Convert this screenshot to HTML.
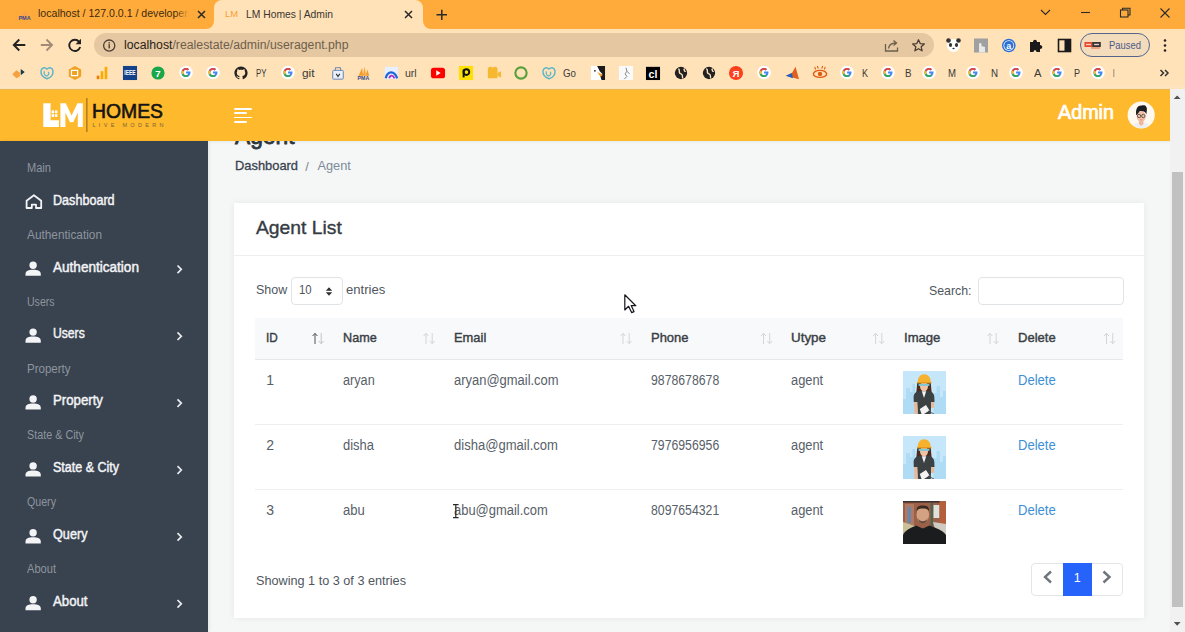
<!DOCTYPE html>
<html><head><meta charset="utf-8"><title>LM Homes | Admin</title><style>
*{box-sizing:border-box;margin:0;padding:0}
html,body{width:1185px;height:632px;overflow:hidden;background:#f4f6f8;font-family:"Liberation Sans",sans-serif}
.a{position:absolute}
.t{position:absolute;white-space:nowrap;transform-origin:0 0;line-height:1}
svg.o{position:absolute;left:0;top:0}
</style></head><body>
<div class="a" style="left:0;top:0;width:1185px;height:89px;background:#ffe2b8"></div>
<div class="a" style="left:0;top:0;width:214px;height:29px;background:#ffab3b;border-bottom-right-radius:8px"></div>
<div class="a" style="left:423px;top:0;width:762px;height:29px;background:#ffab3b;border-bottom-left-radius:8px"></div>
<div class="a" style="left:214px;top:0;width:209px;height:10px;background:#ffab3b"></div>
<div class="a" style="left:214px;top:0;width:209px;height:29px;background:#ffe2b8;border-radius:8px 8px 0 0"></div>
<div class="a" style="left:94px;top:33px;width:840px;height:24px;background:#e5c8a1;border-radius:12px"></div>
<div class="a" style="left:0;top:86px;width:1185px;height:2px;background:#ffe5bf"></div>
<div class="a" style="left:1080px;top:33px;width:70px;height:24px;border:1.4px solid #54648c;border-radius:12px;background:#f3dcbc"></div>
<div class="t" style="left:38.40px;top:8.12px;font-size:11.5px;color:#3b2a10;transform:scaleX(0.9185);">localhost / 127.0.0.1 / developers</div>
<div class="a" style="left:175px;top:5px;width:18px;height:18px;background:linear-gradient(90deg,rgba(255,171,59,0),#ffab3b 80%)"></div>
<div class="a" style="left:193px;top:5px;width:20px;height:18px;background:#ffab3b"></div>
<div class="t" style="left:245.90px;top:8.55px;font-size:11px;color:#3a3530;transform:scaleX(0.9382);">LM Homes | Admin</div>
<div class="t" style="left:224.90px;top:10.38px;font-size:8.5px;color:#f5a030;transform:scaleX(1.1003);">LM</div>
<div class="t" style="left:123.50px;top:39.08px;font-size:12.5px;color:#2b2118;transform:scaleX(0.9820);">localhost<span style="color:#6e5e4c">/realestate/admin/useragent.php</span></div>
<div class="t" style="left:1109.00px;top:39.52px;font-size:11.5px;color:#4a5a8a;transform:scaleX(0.8208);">Paused</div>
<div class="t" style="left:255.70px;top:67.72px;font-size:11.5px;color:#3a3a3a;transform:scaleX(0.6839);">PY</div>
<div class="t" style="left:301.50px;top:67.72px;font-size:11.5px;color:#3a3a3a;transform:scaleX(1.0303);">git</div>
<div class="t" style="left:405.00px;top:67.72px;font-size:11.5px;color:#3a3a3a;transform:scaleX(0.9166);">url</div>
<div class="t" style="left:563.00px;top:67.72px;font-size:11.5px;color:#3a3a3a;transform:scaleX(0.8468);">Go</div>
<div class="t" style="left:862.00px;top:67.72px;font-size:11.5px;color:#3a3a3a;transform:scaleX(0.7846);">K</div>
<div class="t" style="left:905.40px;top:67.72px;font-size:11.5px;color:#3a3a3a;transform:scaleX(0.8500);">B</div>
<div class="t" style="left:947.60px;top:67.72px;font-size:11.5px;color:#3a3a3a;transform:scaleX(0.8331);">M</div>
<div class="t" style="left:991.00px;top:67.72px;font-size:11.5px;color:#3a3a3a;transform:scaleX(0.8454);">N</div>
<div class="t" style="left:1033.50px;top:67.72px;font-size:11.5px;color:#3a3a3a;transform:scaleX(0.9734);">A</div>
<div class="t" style="left:1074.00px;top:67.72px;font-size:11.5px;color:#3a3a3a;transform:scaleX(0.7846);">P</div>
<div class="t" style="left:1113.00px;top:67.72px;font-size:11.5px;color:#3a3a3a;transform:scaleX(0.4658);">I</div>
<svg class="o" width="1185" height="88" viewBox="0 0 1185 88">
<defs><g id="g"><circle cx="8" cy="8" r="8" fill="#fff"/>
<path d="M12.6 6.9 H8.1 V9.1 H10.7 C10.4 10.4 9.3 11.2 8 11.2 C6.2 11.2 4.8 9.8 4.8 8 C4.8 6.2 6.2 4.8 8 4.8 C8.8 4.8 9.5 5.1 10 5.6 L11.6 4 C10.7 3.2 9.4 2.6 8 2.6 C5 2.6 2.6 5 2.6 8 C2.6 11 5 13.4 8 13.4 C11 13.4 13.3 11.2 13.3 8 C13.3 7.6 13.2 7.3 13.2 6.9 Z" fill="#4285f4"/>
<path d="M3.2 5.5 L5.1 6.9 C5.5 5.6 6.6 4.8 8 4.8 C8.8 4.8 9.5 5.1 10 5.6 L11.6 4 C10.7 3.2 9.4 2.6 8 2.6 C5.9 2.6 4.1 3.8 3.2 5.5 Z" fill="#ea4335"/>
<path d="M2.6 8 C2.6 8.9 2.8 9.7 3.2 10.5 L5.1 9.1 C4.9 8.8 4.8 8.4 4.8 8 C4.8 7.6 4.9 7.2 5.1 6.9 L3.2 5.5 C2.8 6.3 2.6 7.1 2.6 8 Z" fill="#fbbc05"/>
<path d="M3.2 10.5 C4.1 12.2 5.9 13.4 8 13.4 C9.4 13.4 10.6 12.9 11.5 12.1 L9.7 10.7 C9.2 11 8.6 11.2 8 11.2 C6.6 11.2 5.5 10.4 5.1 9.1 Z" fill="#34a853"/>
</g></defs>
<g transform="translate(19.0,73.0) scale(.88) translate(-8,-8)"><path d="M0.5 9.5 L5 5 L9 7.5 L9 12 L5 14 Z" fill="#f7a040"/><path d="M10 3.5 L14.5 7 L10 10.5 Z" fill="#143a44"/></g>
<g transform="translate(47.0,73.0) scale(.88) translate(-8,-8)"><path d="M8 14.5 C3.5 13 0.8 9.5 1.2 5.5 C1.6 2 5.5 1 8 3.6 C10.5 1 14.4 2 14.8 5.5 C15.2 9.5 12.5 13 8 14.5 Z" fill="none" stroke="#5cb4c8" stroke-width="1.6"/><path d="M5 6 C4 9 6 12 8.5 11 C10.5 10 10.5 7 9 7" fill="none" stroke="#5cb4c8" stroke-width="1.4"/></g>
<g transform="translate(75.0,73.0) scale(.88) translate(-8,-8)"><path d="M8 0 L15 4 L15 12 L8 16 L1 12 L1 4 Z" fill="#f0a020"/><rect x="4" y="5" width="7" height="6" fill="none" stroke="#fff" stroke-width="1.4"/></g>
<g transform="translate(102.0,73.0) scale(.88) translate(-8,-8)"><rect x="2" y="11" width="3" height="4" fill="#f57c00"/><rect x="6.5" y="6" width="3" height="9" fill="#f9ab00"/><rect x="11" y="1" width="3" height="14" fill="#f9ab00"/></g>
<g transform="translate(130.0,73.0) scale(.88) translate(-8,-8)"><rect x="0" y="0" width="16" height="16" fill="#13418a"/><text x="8" y="10.8" font-size="7.5" fill="#fff" text-anchor="middle" font-family="Liberation Sans" font-weight="bold" textLength="13" lengthAdjust="spacingAndGlyphs">IEEE</text></g>
<g transform="translate(158.0,73.0) scale(.88) translate(-8,-8)"><circle cx="8" cy="8" r="7.5" fill="#1aa64a"/><text x="8" y="12" font-size="11" fill="#fff" text-anchor="middle" font-family="Liberation Sans" font-weight="bold">7</text></g>
<use href="#g" transform="translate(186,72.5) scale(.85) translate(-8,-8)"/>
<use href="#g" transform="translate(213,72.5) scale(.85) translate(-8,-8)"/>
<g transform="translate(241.0,73.0) scale(.88) translate(-8,-8)"><path d="M8 0.5 C3.8 0.5 0.5 3.9 0.5 8.1 C0.5 11.4 2.6 14.2 5.6 15.2 C6 15.3 6.1 15 6.1 14.8 V13.5 C4 13.9 3.6 12.6 3.6 12.6 C3.2 11.7 2.7 11.5 2.7 11.5 C2 11 2.7 11 2.7 11 C3.5 11.1 3.9 11.8 3.9 11.8 C4.6 13 5.7 12.6 6.1 12.4 C6.2 11.9 6.4 11.6 6.6 11.4 C4.9 11.2 3.2 10.6 3.2 7.8 C3.2 7 3.5 6.3 3.9 5.8 C3.8 5.6 3.6 4.8 4 3.8 C4 3.8 4.6 3.6 6.1 4.6 C6.7 4.4 7.4 4.3 8 4.3 C8.6 4.3 9.3 4.4 9.9 4.6 C11.4 3.6 12 3.8 12 3.8 C12.4 4.8 12.2 5.6 12.1 5.8 C12.5 6.3 12.8 7 12.8 7.8 C12.8 10.6 11.1 11.2 9.4 11.4 C9.7 11.7 9.9 12.1 9.9 12.8 V14.8 C9.9 15 10 15.3 10.4 15.2 C13.4 14.2 15.5 11.4 15.5 8.1 C15.5 3.9 12.2 0.5 8 0.5 Z" fill="#222"/></g>
<use href="#g" transform="translate(288,72.5) scale(.85) translate(-8,-8)"/>
<g transform="translate(338.0,73.0) scale(.88) translate(-8,-8)"><rect x="2" y="5" width="12" height="10" rx="1" fill="#e8f0fa" stroke="#5a7ab0" stroke-width="1"/><path d="M5 5 L5 2 L11 2 L11 5" fill="none" stroke="#5a7ab0"/><path d="M6 9 L8 12 L10 9" fill="none" stroke="#333" stroke-width="1.3"/></g>
<g transform="translate(363.0,73.0) scale(.88) translate(-8,-8)"><path d="M3 11 L7 2 L8 11 Z" fill="#f39a2a"/><path d="M7.5 11 L10 1 L11.5 11 Z" fill="#f5a83a"/><path d="M11 11 L13 4 L15 11 Z" fill="#f39a2a"/><text x="8.5" y="15.5" font-size="6" fill="#34488a" text-anchor="middle" font-family="Liberation Sans" font-weight="bold">PMA</text></g>
<g transform="translate(391.0,73.0) scale(.88) translate(-8,-8)"><rect x="1" y="1" width="15" height="14" fill="#e8f0ff"/><path d="M2 14 C4 5 12 5 15 14" fill="none" stroke="#1a66d8" stroke-width="2.5"/><path d="M6 14 C7 10 10 10 12 14" fill="none" stroke="#b030c0" stroke-width="2"/></g>
<g transform="translate(438.0,73.0) scale(.88) translate(-8,-8)"><rect x="0" y="2" width="16" height="12" rx="3" fill="#ff0000"/><path d="M6 5 L11 8 L6 11 Z" fill="#fff"/></g>
<g transform="translate(466.0,73.0) scale(.88) translate(-8,-8)"><rect x="0" y="0" width="16" height="16" fill="#ffe000"/><circle cx="8.5" cy="7" r="3.2" fill="none" stroke="#111" stroke-width="2.2"/><rect x="4.2" y="4" width="2.2" height="9" fill="#111"/></g>
<g transform="translate(494.0,73.0) scale(.88) translate(-8,-8)"><rect x="1" y="5" width="11" height="9" rx="1" fill="#f5b830"/><circle cx="4" cy="4" r="3" fill="#f5b830"/><circle cx="9" cy="4" r="3" fill="#f5b830"/><path d="M12 8 L16 6 L16 13 L12 11 Z" fill="#f5b830"/></g>
<g transform="translate(521.0,73.0) scale(.88) translate(-8,-8)"><circle cx="8" cy="8" r="6.4" fill="none" stroke="#58a03c" stroke-width="2.4"/></g>
<g transform="translate(549.0,73.0) scale(.88) translate(-8,-8)"><path d="M8 14.5 C3.5 13 0.8 9.5 1.2 5.5 C1.6 2 5.5 1 8 3.6 C10.5 1 14.4 2 14.8 5.5 C15.2 9.5 12.5 13 8 14.5 Z" fill="none" stroke="#5cb4c8" stroke-width="1.6"/><path d="M5 6 C4 9 6 12 8.5 11 C10.5 10 10.5 7 9 7" fill="none" stroke="#5cb4c8" stroke-width="1.4"/></g>
<g transform="translate(598.0,73.0) scale(.88) translate(-8,-8)"><rect x="0" y="0" width="16" height="16" fill="#fff"/><path d="M7 0 H16 V16 H12 L10.5 11 L13 9 L10 6 Z" fill="#1a1a1a"/><circle cx="4.5" cy="5.5" r="1" fill="#222"/><path d="M7 7 L13.5 10 L11 12.5 Z" fill="#f0a030"/></g>
<g transform="translate(626.0,73.0) scale(.88) translate(-8,-8)"><rect x="0" y="0" width="16" height="16" fill="#fafafa"/><path d="M8 2 L9 6 L7 9 L9 12 L6 15 M9 6 L12 9" fill="none" stroke="#777" stroke-width="1"/></g>
<g transform="translate(653.0,73.0) scale(.88) translate(-8,-8)"><rect x="0" y="1" width="16" height="15" fill="#000"/><text x="8" y="13.5" font-size="12" fill="#fff" text-anchor="middle" font-family="Liberation Sans" font-weight="bold">cl</text></g>
<g transform="translate(681.0,73.0) scale(.88) translate(-8,-8)"><circle cx="8" cy="8" r="7" fill="#222"/><path d="M5 3 C8 5 4 8 8 9 C11 10 9 13 10 14 M12 3 C10 5 13 6 13 7" fill="none" stroke="#ffe2b8" stroke-width="1.6"/></g>
<g transform="translate(709.0,73.0) scale(.88) translate(-8,-8)"><circle cx="8" cy="8" r="7" fill="#222"/><path d="M5 3 C8 5 4 8 8 9 C11 10 9 13 10 14 M12 3 C10 5 13 6 13 7" fill="none" stroke="#ffe2b8" stroke-width="1.6"/></g>
<g transform="translate(736.0,73.0) scale(.88) translate(-8,-8)"><circle cx="8" cy="8" r="8" fill="#fc3f1d"/><text x="8" y="12.5" font-size="11" fill="#fff" text-anchor="middle" font-family="Liberation Sans" font-weight="bold">Я</text></g>
<use href="#g" transform="translate(764,72.5) scale(.85) translate(-8,-8)"/>
<g transform="translate(792.0,73.0) scale(.88) translate(-8,-8)"><path d="M1 11 L8 8 L12 1 L16 15 Z" fill="#e06020"/><path d="M1 11 L8 8 L9 14 Z" fill="#2060c0"/></g>
<g transform="translate(820.0,73.0) scale(.88) translate(-8,-8)"><ellipse cx="8" cy="9" rx="7.5" ry="4" fill="none" stroke="#e05a10" stroke-width="1.6"/><circle cx="8" cy="9" r="2.5" fill="#e05a10"/><path d="M3 4 L2 1 M6 3 L5 0 M10 3 L11 0 M13 4 L14 1" stroke="#e05a10" stroke-width="1.2"/></g>
<use href="#g" transform="translate(847,72.5) scale(.85) translate(-8,-8)"/>
<use href="#g" transform="translate(888,72.5) scale(.85) translate(-8,-8)"/>
<use href="#g" transform="translate(929,72.5) scale(.85) translate(-8,-8)"/>
<use href="#g" transform="translate(973,72.5) scale(.85) translate(-8,-8)"/>
<use href="#g" transform="translate(1016,72.5) scale(.85) translate(-8,-8)"/>
<use href="#g" transform="translate(1057,72.5) scale(.85) translate(-8,-8)"/>
<use href="#g" transform="translate(1098,72.5) scale(.85) translate(-8,-8)"/>
<g fill="none" stroke="#222" stroke-width="1.9" stroke-linecap="butt">
<path d="M14 45 H25.3 M19.3 39.5 L13.8 45 L19.3 50.5"/>
</g>
<g fill="none" stroke="#a08c74" stroke-width="1.9"><path d="M40.8 45 H52 M46.5 39.5 L52 45 L46.5 50.5"/></g>
<g fill="none" stroke="#222" stroke-width="1.9"><path d="M79.2 41.8 A5.6 5.6 0 1 0 80.2 47"/></g><path d="M81 38.8 V44.2 H75.6 Z" fill="#222"/>
<circle cx="109.2" cy="45.6" r="5.6" fill="none" stroke="#4a3e32" stroke-width="1.3"/><rect x="108.5" y="44.2" width="1.4" height="4.2" fill="#4a3e32"/><rect x="108.5" y="42.2" width="1.4" height="1.3" fill="#4a3e32"/>
<g fill="none" stroke="#6e5e4c" stroke-width="1.3"><path d="M885.5 44 V51 H897.5 V47.5"/><path d="M888.5 48.5 C889 44.5 892 43 896 43 M893.5 40.5 L896.5 43 L893.5 45.5"/></g>
<path d="M918.5 39.8 L920.2 43.6 L924.3 44 L921.2 46.8 L922.1 50.8 L918.5 48.7 L914.9 50.8 L915.8 46.8 L912.7 44 L916.8 43.6 Z" fill="none" stroke="#4a3e32" stroke-width="1.3" stroke-linejoin="round"/>
<g><circle cx="953.5" cy="45.5" r="6.5" fill="#fff"/><circle cx="948.5" cy="40.5" r="2.3" fill="#333"/><circle cx="958.5" cy="40.5" r="2.3" fill="#333"/><ellipse cx="950.5" cy="45" rx="1.6" ry="2" fill="#333"/><ellipse cx="956.5" cy="45" rx="1.6" ry="2" fill="#333"/><ellipse cx="953.5" cy="48.5" rx="1.2" ry=".8" fill="#333"/></g>
<rect x="974" y="38.5" width="14" height="14" fill="#a0a0a0"/><path d="M979 52.5 V44 C979 42.5 981.5 42.5 981.5 44 V46 L985 47 V52.5 Z" fill="#e8e8e8"/>
<circle cx="1008.8" cy="45.5" r="6.8" fill="#2b6fd6"/><circle cx="1008.8" cy="45.5" r="5.3" fill="#fff"/><circle cx="1008.8" cy="45.5" r="4.6" fill="#2b6fd6"/><text x="1008.8" y="48.8" font-size="9" font-family="Liberation Sans" font-weight="bold" fill="#fff" text-anchor="middle">a</text>
<path d="M1030 42 H1033 C1033 39 1037 39 1037 42 H1040 V45 C1043 45 1043 49 1040 49 V52 H1036.5 C1036.5 49.5 1033.5 49.5 1033.5 52 H1030 Z" fill="#1a1a1a"/>
<rect x="1058.5" y="39.5" width="12" height="12" fill="none" stroke="#1a1a1a" stroke-width="1.6"/><rect x="1064.5" y="39.5" width="6" height="12" fill="#1a1a1a"/>
<rect x="1084.5" y="42" width="8" height="5" fill="#e5482e"/><rect x="1092.2" y="42" width="8.6" height="5" fill="#3a3432"/><rect x="1091" y="47.6" width="9" height=".8" fill="#e5482e"/><rect x="1086" y="43.8" width="5" height="1.4" fill="#f8d0c0"/><rect x="1094" y="43.8" width="5" height="1.4" fill="#d8d0c8"/>
<circle cx="1165" cy="40.5" r="1.3" fill="#222"/><circle cx="1165" cy="45.5" r="1.3" fill="#222"/><circle cx="1165" cy="50.5" r="1.3" fill="#222"/>
<path d="M19 19 L25 11 L31 19 Z" fill="#f5a050" opacity=".7"/><text x="24.5" y="20" font-size="5.5" font-family="Liberation Sans" font-weight="bold" fill="#3a4a8a" text-anchor="middle">PMA</text>
<g stroke="#2a2a2a" stroke-width="1.5"><path d="M198 11 L205 18 M205 11 L198 18"/><path d="M405 11 L412 18 M412 11 L405 18"/><path d="M436.5 14.8 H447 M441.8 9.7 V19.9"/></g>
<g fill="none" stroke="#2a2a2a" stroke-width="1.1"><path d="M1041 10 L1045.5 14.5 L1050 10"/><path d="M1081 12.5 H1090"/><rect x="1120.5" y="10" width="7.5" height="7"/><path d="M1122.5 10 V8.2 H1130 V15 H1128"/><path d="M1160.5 8.5 L1169.5 17.5 M1169.5 8.5 L1160.5 17.5"/></g>
<g fill="none" stroke="#333" stroke-width="1.5"><path d="M1160.5 70 L1163.5 73 L1160.5 76 M1165 70 L1168 73 L1165 76"/></g>
</svg>
<div class="a" style="left:208px;top:141px;width:962px;height:491px;background:#f5f7f7"></div>
<div class="t" style="left:234.50px;top:123.50px;font-size:24px;color:#2f363e;-webkit-text-stroke:0.8px #2f363e;transform:scaleX(0.9481);">Agent</div>
<div class="a" style="left:0;top:89px;width:1170px;height:52px;background:#ffb92c;border-top:1px solid #e9b654;box-shadow:0 1px 3px rgba(0,0,0,.06)"></div>
<svg class="o" style="left:0;top:88px" width="200" height="53" viewBox="0 88 200 53"><path d="M43.3 103.2 H50.6 V120.2 H59 V126.9 H43.3 Z" fill="#fff"/><rect x="51.6" y="110.4" width="2.5" height="2.8" fill="#fff"/><rect x="54.9" y="110.4" width="2.5" height="2.8" fill="#fff"/><rect x="51.6" y="114.1" width="2.5" height="2.8" fill="#fff"/><rect x="54.9" y="114.1" width="2.5" height="2.8" fill="#fff"/><path d="M60.4 126.9 V103.2 H65.8 L71.6 115.5 L77.4 103.2 H82.8 V126.9 H77.8 V112.5 L73.2 122.3 H70 L65.4 112.5 V126.9 Z" fill="#fff"/><rect x="86.2" y="98" width="1.3" height="34" fill="#a8741c"/></svg>
<div class="t" style="left:92.30px;top:102.02px;font-size:19.5px;color:#141414;transform:scaleX(0.9935);-webkit-text-stroke:0.6px #141414;">HOMES</div>
<div class="t" style="left:92.50px;top:122.53px;font-size:5.5px;color:#7a6538;letter-spacing:3.3px;">LIVE MODERN</div>
<div class="a" style="left:234.1px;top:108px;width:17.7px;height:1.9px;background:#fff;border-radius:1px"></div>
<div class="a" style="left:234.1px;top:112.3px;width:13.1px;height:1.9px;background:#fff;border-radius:1px"></div>
<div class="a" style="left:234.1px;top:116.6px;width:17.7px;height:1.9px;background:#fff;border-radius:1px"></div>
<div class="a" style="left:234.1px;top:121px;width:13.1px;height:1.9px;background:#fff;border-radius:1px"></div>
<div class="t" style="left:1057.60px;top:102.62px;font-size:19.5px;color:#fff;-webkit-text-stroke:0.7px #fff;transform:scaleX(1.0130);">Admin</div>
<svg class="o" style="left:1120px;top:95px" width="40" height="40" viewBox="1120 95 40 40"><defs><clipPath id="av"><circle cx="1141.2" cy="115" r="13.2"/></clipPath></defs><circle cx="1141.2" cy="115" r="13.6" fill="#fff8ee"/><g clip-path="url(#av)"><path d="M1131 130 C1132 124 1136 122.5 1141.2 122.5 C1146.4 122.5 1150.4 124 1151.4 130 Z" fill="#eceef0"/><path d="M1139 121 H1143.4 V124 L1141.2 126 L1139 124 Z" fill="#eeb59c"/><ellipse cx="1141.2" cy="116.5" rx="4.6" ry="5.4" fill="#f4bfa6"/><path d="M1136.2 115 C1135.2 108 1138.5 105 1142 105.6 C1145 104.6 1147.6 106.8 1146.8 110.5 L1146.4 114.5 C1145.4 111.6 1143 110.8 1139.6 111.2 L1136.8 115 Z" fill="#1c1c22"/><circle cx="1139.1" cy="116" r="1.7" fill="none" stroke="#333" stroke-width=".7"/><circle cx="1143.3" cy="116" r="1.7" fill="none" stroke="#333" stroke-width=".7"/><path d="M1140 119.6 Q1141.2 120.4 1142.4 119.6" fill="none" stroke="#c07060" stroke-width=".6"/></g></svg>
<div class="a" style="left:0;top:141px;width:208px;height:491px;background:#39424f;box-shadow:1px 0 4px rgba(0,0,0,.08)"></div>
<div class="t" style="left:26.50px;top:161.80px;font-size:12px;color:#8e959e;transform:scaleX(0.9217);">Main</div>
<div class="t" style="left:52.60px;top:193.67px;font-size:13.8px;color:#f3f4f6;-webkit-text-stroke:0.45px #f3f4f6;transform:scaleX(0.9128);">Dashboard</div>
<div class="t" style="left:26.50px;top:228.70px;font-size:12px;color:#8e959e;transform:scaleX(0.9858);">Authentication</div>
<div class="t" style="left:52.60px;top:260.57px;font-size:13.8px;color:#f3f4f6;-webkit-text-stroke:0.45px #f3f4f6;transform:scaleX(0.9829);">Authentication</div>
<div class="t" style="left:26.50px;top:295.60px;font-size:12px;color:#8e959e;transform:scaleX(0.8780);">Users</div>
<div class="t" style="left:52.60px;top:327.47px;font-size:13.8px;color:#f3f4f6;-webkit-text-stroke:0.45px #f3f4f6;transform:scaleX(0.8801);">Users</div>
<div class="t" style="left:26.50px;top:362.50px;font-size:12px;color:#8e959e;transform:scaleX(0.9590);">Property</div>
<div class="t" style="left:52.60px;top:394.37px;font-size:13.8px;color:#f3f4f6;-webkit-text-stroke:0.45px #f3f4f6;transform:scaleX(0.9585);">Property</div>
<div class="t" style="left:26.50px;top:429.40px;font-size:12px;color:#8e959e;transform:scaleX(0.8996);">State &amp; City</div>
<div class="t" style="left:52.60px;top:461.27px;font-size:13.8px;color:#f3f4f6;-webkit-text-stroke:0.45px #f3f4f6;transform:scaleX(0.9058);">State &amp; City</div>
<div class="t" style="left:26.50px;top:496.30px;font-size:12px;color:#8e959e;transform:scaleX(0.8869);">Query</div>
<div class="t" style="left:52.60px;top:528.17px;font-size:13.8px;color:#f3f4f6;-webkit-text-stroke:0.45px #f3f4f6;transform:scaleX(0.9174);">Query</div>
<div class="t" style="left:26.50px;top:563.20px;font-size:12px;color:#8e959e;transform:scaleX(0.9242);">About</div>
<div class="t" style="left:52.60px;top:595.07px;font-size:13.8px;color:#f3f4f6;-webkit-text-stroke:0.45px #f3f4f6;transform:scaleX(0.9560);">About</div>
<svg class="o" width="208" height="632" viewBox="0 0 208 632">
<path d="M26.6 200.70000000000002 L33.9 195.20000000000002 L41.2 200.70000000000002 V208.0 H36 V204.6 H31.8 V208.0 H26.6 Z" fill="none" stroke="#f3f4f6" stroke-width="1.8" stroke-linejoin="round"/>
<circle cx="33.1" cy="265.2" r="3.7" fill="#f3f4f6"/>
<path d="M25.5 275.8 V274.1 C25.5 270.7 28.5 269.7 33.1 269.7 C37.7 269.7 40.8 270.7 40.8 274.1 V275.8 Z" fill="#f3f4f6"/>
<path d="M177.5 265.5 L181.3 269.3 L177.5 273.1" fill="none" stroke="#e8eaed" stroke-width="1.7"/>
<circle cx="33.1" cy="332.1" r="3.7" fill="#f3f4f6"/>
<path d="M25.5 342.70000000000005 V341.00000000000006 C25.5 337.6 28.5 336.6 33.1 336.6 C37.7 336.6 40.8 337.6 40.8 341.00000000000006 V342.70000000000005 Z" fill="#f3f4f6"/>
<path d="M177.5 332.40000000000003 L181.3 336.20000000000005 L177.5 340.00000000000006" fill="none" stroke="#e8eaed" stroke-width="1.7"/>
<circle cx="33.1" cy="399.0" r="3.7" fill="#f3f4f6"/>
<path d="M25.5 409.6 V407.90000000000003 C25.5 404.5 28.5 403.5 33.1 403.5 C37.7 403.5 40.8 404.5 40.8 407.90000000000003 V409.6 Z" fill="#f3f4f6"/>
<path d="M177.5 399.3 L181.3 403.1 L177.5 406.90000000000003" fill="none" stroke="#e8eaed" stroke-width="1.7"/>
<circle cx="33.1" cy="465.9" r="3.7" fill="#f3f4f6"/>
<path d="M25.5 476.5 V474.8 C25.5 471.4 28.5 470.4 33.1 470.4 C37.7 470.4 40.8 471.4 40.8 474.8 V476.5 Z" fill="#f3f4f6"/>
<path d="M177.5 466.2 L181.3 470.0 L177.5 473.8" fill="none" stroke="#e8eaed" stroke-width="1.7"/>
<circle cx="33.1" cy="532.8" r="3.7" fill="#f3f4f6"/>
<path d="M25.5 543.4 V541.6999999999999 C25.5 538.3 28.5 537.3 33.1 537.3 C37.7 537.3 40.8 538.3 40.8 541.6999999999999 V543.4 Z" fill="#f3f4f6"/>
<path d="M177.5 533.1 L181.3 536.9 L177.5 540.6999999999999" fill="none" stroke="#e8eaed" stroke-width="1.7"/>
<circle cx="33.1" cy="599.7" r="3.7" fill="#f3f4f6"/>
<path d="M25.5 610.3000000000001 V608.6 C25.5 605.2 28.5 604.2 33.1 604.2 C37.7 604.2 40.8 605.2 40.8 608.6 V610.3000000000001 Z" fill="#f3f4f6"/>
<path d="M177.5 600.0000000000001 L181.3 603.8000000000001 L177.5 607.6" fill="none" stroke="#e8eaed" stroke-width="1.7"/>
</svg>
<div class="t" style="left:234.80px;top:159.62px;font-size:12.8px;color:#3a4350;-webkit-text-stroke:0.3px #3a4350;transform:scaleX(1.0065);">Dashboard</div>
<div class="t" style="left:305.30px;top:160.62px;font-size:12.8px;color:#7d8792;">/</div>
<div class="t" style="left:317.40px;top:159.62px;font-size:12.8px;color:#7d8a97;">Agent</div>
<div class="a" style="left:234px;top:203px;width:910px;height:415px;background:#fff;box-shadow:0 0 7px rgba(0,0,0,.065)"></div>
<div class="a" style="left:234px;top:255px;width:910px;height:1px;background:#eceeef"></div>
<div class="t" style="left:255.80px;top:218.88px;font-size:18.5px;color:#353b42;-webkit-text-stroke:0.35px #353b42;transform:scaleX(1.0434);">Agent List</div>
<div class="t" style="left:255.70px;top:283.39px;font-size:13.3px;color:#4f565e;transform:scaleX(0.9365);">Show</div>
<div class="a" style="left:291px;top:277.4px;width:52.2px;height:27.8px;border:1px solid #e1e4e7;border-radius:4px;background:#fff"></div>
<div class="t" style="left:298.60px;top:283.98px;font-size:12.5px;color:#4f565e;transform:scaleX(0.9081);">10</div>
<svg class="o" style="left:320px;top:280px" width="20" height="20" viewBox="320 280 20 20"><path d="M325.8 290.8 L329 287.3 L332.2 290.8 Z M325.8 292.3 L329 295.8 L332.2 292.3 Z" fill="#2f2f2f"/></svg>
<div class="t" style="left:346.40px;top:283.39px;font-size:13.3px;color:#4f565e;transform:scaleX(0.9850);">entries</div>
<div class="t" style="left:928.50px;top:283.89px;font-size:13.3px;color:#4f565e;transform:scaleX(0.9276);">Search:</div>
<div class="a" style="left:977.5px;top:277.4px;width:146px;height:27.8px;border:1px solid #e1e4e7;border-radius:4px;background:#fff"></div>
<div class="a" style="left:255px;top:318px;width:868px;height:41.5px;background:#f8f9fa;border-bottom:1px solid #e6e9ec"></div>
<div class="t" style="left:265.80px;top:330.78px;font-size:13.2px;color:#383e45;-webkit-text-stroke:0.4px #383e45;transform:scaleX(0.8939);">ID</div>
<div class="t" style="left:342.80px;top:330.78px;font-size:13.2px;color:#383e45;-webkit-text-stroke:0.4px #383e45;transform:scaleX(0.9590);">Name</div>
<div class="t" style="left:454.00px;top:330.78px;font-size:13.2px;color:#383e45;-webkit-text-stroke:0.4px #383e45;transform:scaleX(0.9788);">Email</div>
<div class="t" style="left:651.00px;top:330.78px;font-size:13.2px;color:#383e45;-webkit-text-stroke:0.4px #383e45;transform:scaleX(0.9830);">Phone</div>
<div class="t" style="left:791.20px;top:330.78px;font-size:13.2px;color:#383e45;-webkit-text-stroke:0.4px #383e45;transform:scaleX(1.0159);">Utype</div>
<div class="t" style="left:903.60px;top:330.78px;font-size:13.2px;color:#383e45;-webkit-text-stroke:0.4px #383e45;transform:scaleX(0.9919);">Image</div>
<div class="t" style="left:1017.80px;top:330.78px;font-size:13.2px;color:#383e45;-webkit-text-stroke:0.4px #383e45;transform:scaleX(0.9883);">Delete</div>
<svg class="o" style="left:250px;top:325px" width="880" height="25" viewBox="250 325 880 25">
<path d="M315 344 V333.5 M312.6 336 L315 333.3 L317.4 336" fill="none" stroke="#50555b" stroke-width="1"/>
<path d="M321.2 333 V343.5 M318.8 341 L321.2 343.7 L323.6 341" fill="none" stroke="#c0c4c9" stroke-width="1"/>
<path d="M426 344 V333.5 M423.6 336 L426 333.3 L428.4 336" fill="none" stroke="#d2d6da" stroke-width="1"/>
<path d="M432.2 333 V343.5 M429.8 341 L432.2 343.7 L434.6 341" fill="none" stroke="#d2d6da" stroke-width="1"/>
<path d="M623 344 V333.5 M620.6 336 L623 333.3 L625.4 336" fill="none" stroke="#d2d6da" stroke-width="1"/>
<path d="M629.2 333 V343.5 M626.8 341 L629.2 343.7 L631.6 341" fill="none" stroke="#d2d6da" stroke-width="1"/>
<path d="M763.5 344 V333.5 M761.1 336 L763.5 333.3 L765.9 336" fill="none" stroke="#d2d6da" stroke-width="1"/>
<path d="M769.7 333 V343.5 M767.3 341 L769.7 343.7 L772.1 341" fill="none" stroke="#d2d6da" stroke-width="1"/>
<path d="M875.6 344 V333.5 M873.2 336 L875.6 333.3 L878.0 336" fill="none" stroke="#d2d6da" stroke-width="1"/>
<path d="M881.8000000000001 333 V343.5 M879.4 341 L881.8000000000001 343.7 L884.2 341" fill="none" stroke="#d2d6da" stroke-width="1"/>
<path d="M990 344 V333.5 M987.6 336 L990 333.3 L992.4 336" fill="none" stroke="#d2d6da" stroke-width="1"/>
<path d="M996.2 333 V343.5 M993.8 341 L996.2 343.7 L998.6 341" fill="none" stroke="#d2d6da" stroke-width="1"/>
<path d="M1106.5 344 V333.5 M1104.1 336 L1106.5 333.3 L1108.9 336" fill="none" stroke="#d2d6da" stroke-width="1"/>
<path d="M1112.7 333 V343.5 M1110.3 341 L1112.7 343.7 L1115.1 341" fill="none" stroke="#d2d6da" stroke-width="1"/>
</svg>
<div class="t" style="left:266.20px;top:372.80px;font-size:14px;color:#586068;">1</div>
<div class="t" style="left:342.80px;top:372.80px;font-size:14px;color:#586068;transform:scaleX(0.9057);">aryan</div>
<div class="t" style="left:454.00px;top:372.80px;font-size:14px;color:#586068;transform:scaleX(0.9253);">aryan@gmail.com</div>
<div class="t" style="left:651.00px;top:372.80px;font-size:14px;color:#586068;transform:scaleX(0.8762);">9878678678</div>
<div class="t" style="left:791.20px;top:372.80px;font-size:14px;color:#586068;transform:scaleX(0.9182);">agent</div>
<div class="t" style="left:1017.80px;top:372.80px;font-size:14px;color:#3d8fd6;transform:scaleX(0.9318);">Delete</div>
<div class="a" style="left:255px;top:424px;width:868px;height:1px;background:#eceef0"></div>
<div class="t" style="left:266.20px;top:437.80px;font-size:14px;color:#586068;">2</div>
<div class="t" style="left:342.80px;top:437.80px;font-size:14px;color:#586068;transform:scaleX(0.9245);">disha</div>
<div class="t" style="left:454.00px;top:437.80px;font-size:14px;color:#586068;transform:scaleX(0.9327);">disha@gmail.com</div>
<div class="t" style="left:651.00px;top:437.80px;font-size:14px;color:#586068;transform:scaleX(0.8762);">7976956956</div>
<div class="t" style="left:791.20px;top:437.80px;font-size:14px;color:#586068;transform:scaleX(0.9182);">agent</div>
<div class="t" style="left:1017.80px;top:437.80px;font-size:14px;color:#3d8fd6;transform:scaleX(0.9318);">Delete</div>
<div class="a" style="left:255px;top:489px;width:868px;height:1px;background:#eceef0"></div>
<div class="t" style="left:266.20px;top:502.80px;font-size:14px;color:#586068;">3</div>
<div class="t" style="left:342.80px;top:502.80px;font-size:14px;color:#586068;transform:scaleX(0.9324);">abu</div>
<div class="t" style="left:454.00px;top:502.80px;font-size:14px;color:#586068;transform:scaleX(0.9254);">abu@gmail.com</div>
<div class="t" style="left:651.00px;top:502.80px;font-size:14px;color:#586068;transform:scaleX(0.8762);">8097654321</div>
<div class="t" style="left:791.20px;top:502.80px;font-size:14px;color:#586068;transform:scaleX(0.9182);">agent</div>
<div class="t" style="left:1017.80px;top:502.80px;font-size:14px;color:#3d8fd6;transform:scaleX(0.9318);">Delete</div>
<svg class="o" style="left:903px;top:370.8px" width="43" height="43" viewBox="0 0 43 43"><rect width="43" height="43" fill="#c6e7f9"/>
<path d="M0 43 V28 H3 V17 H7 V21 H9.5 V13 H12 V43 Z M30.5 43 V22 H33.5 V15 H37 V26 H40 V20 H43 V43 Z" fill="#afdcf4"/>
<path d="M14.2 12 C13.8 16 13.6 21 12.8 25 L29.2 25 C28.4 21 28.2 16 27.8 12 Z" fill="#4b2c20"/>
<ellipse cx="21" cy="15.6" rx="4" ry="4.8" fill="#f0c2a4"/>
<path d="M17 20 C13 20.5 11 22 10.6 26 L10.8 31 L14.2 31 L14.8 43 L27.8 43 L28.2 31 L31.5 31 L31.3 26 C31 22 29 20.5 25 20 Z" fill="#3c4243"/>
<path d="M18.8 20.2 L21 27 L23.2 20.2 Z" fill="#f4f4f4"/>
<path d="M11 31 H14.2 L14.6 43 H11.4 Z M28.2 31 H31.3 L30.8 37 H28.2 Z" fill="#ebb897"/>
<path d="M15.6 12.8 H26.4 V14.9 H15.6 Z" fill="#7cc9da"/>
<path d="M14.6 11.6 C14.6 6.2 17.4 3.3 21.2 3.3 C25 3.3 27.8 6.2 27.8 11.6 Z" fill="#f6b12e"/>
<path d="M14 11 H28.4 V12.4 H14 Z" fill="#e49a1c"/>
<path d="M16.8 38 L23 34 L26.5 39.5 L21 43 L18.5 43 Z" fill="#f3f3f3"/>
<path d="M25 40 L31 43" stroke="#444" stroke-width=".8"/></svg>
<svg class="o" style="left:903px;top:435.8px" width="43" height="43" viewBox="0 0 43 43"><rect width="43" height="43" fill="#c6e7f9"/>
<path d="M0 43 V28 H3 V17 H7 V21 H9.5 V13 H12 V43 Z M30.5 43 V22 H33.5 V15 H37 V26 H40 V20 H43 V43 Z" fill="#afdcf4"/>
<path d="M14.2 12 C13.8 16 13.6 21 12.8 25 L29.2 25 C28.4 21 28.2 16 27.8 12 Z" fill="#4b2c20"/>
<ellipse cx="21" cy="15.6" rx="4" ry="4.8" fill="#f0c2a4"/>
<path d="M17 20 C13 20.5 11 22 10.6 26 L10.8 31 L14.2 31 L14.8 43 L27.8 43 L28.2 31 L31.5 31 L31.3 26 C31 22 29 20.5 25 20 Z" fill="#3c4243"/>
<path d="M18.8 20.2 L21 27 L23.2 20.2 Z" fill="#f4f4f4"/>
<path d="M11 31 H14.2 L14.6 43 H11.4 Z M28.2 31 H31.3 L30.8 37 H28.2 Z" fill="#ebb897"/>
<path d="M15.6 12.8 H26.4 V14.9 H15.6 Z" fill="#7cc9da"/>
<path d="M14.6 11.6 C14.6 6.2 17.4 3.3 21.2 3.3 C25 3.3 27.8 6.2 27.8 11.6 Z" fill="#f6b12e"/>
<path d="M14 11 H28.4 V12.4 H14 Z" fill="#e49a1c"/>
<path d="M16.8 38 L23 34 L26.5 39.5 L21 43 L18.5 43 Z" fill="#f3f3f3"/>
<path d="M25 40 L31 43" stroke="#444" stroke-width=".8"/></svg>
<svg class="o" style="left:903px;top:500.8px" width="43" height="43" viewBox="0 0 43 43"><rect width="43" height="43" fill="#9c6048"/>
<rect x="0" y="0" width="43" height="1.6" fill="#3a3030"/>
<rect x="2" y="3" width="9" height="21" fill="#b07a62"/>
<rect x="4.5" y="6" width="3.5" height="16" fill="#6a86a8"/>
<rect x="27.5" y="2" width="2.5" height="24" fill="#4c6450"/>
<rect x="30.5" y="4" width="6" height="13" fill="#dfe2dc"/>
<rect x="36.5" y="0" width="6.5" height="30" fill="#b4603e"/>
<path d="M0 21 L0 37 L9 37 L12 25 Z" fill="#cbbf98"/>
<path d="M30 21 L43 23 L43 37 L34 35 Z" fill="#cfcbc0"/>
<ellipse cx="19.8" cy="13.6" rx="6.3" ry="8.4" fill="#d2a283"/>
<path d="M13.5 10 C13.3 5.5 16.2 4.6 19.8 4.6 C23.4 4.6 26.3 5.5 26.1 10 C24.8 8.2 22.6 7.6 19.8 7.6 C17 7.6 14.8 8.2 13.5 10 Z" fill="#3a2a22"/>
<path d="M15 17 C15.8 21 17.8 22.2 19.8 22.2 C21.8 22.2 23.8 21 24.6 17 C23.6 19.2 21.8 20.2 19.8 20.2 C17.8 20.2 16 19.2 15 17 Z" fill="#5e4c40"/>
<path d="M0 43 V34 C2 29 8 27 13 24.5 L19.8 27.5 L26.6 24.5 C32 27 40 29 43 34 V43 Z" fill="#1b1c1e"/></svg>
<div class="t" style="left:255.90px;top:574.00px;font-size:13.3px;color:#4f565e;transform:scaleX(0.9526);">Showing 1 to 3 of 3 entries</div>
<div class="a" style="left:1031px;top:562.5px;width:92px;height:33px;border:1px solid #e3e6e9;border-radius:4px;background:#fff"></div>
<div class="a" style="left:1062.8px;top:562.5px;width:29.4px;height:33px;background:#2563fb"></div>
<div class="t" style="left:1073.80px;top:572.38px;font-size:12.5px;color:#fff;">1</div>
<svg class="o" style="left:1035px;top:565px" width="85" height="25" viewBox="1035 565 85 25"><path d="M1051 571.5 L1045 577 L1051 582.5 M1103.5 571.5 L1109.5 577 L1103.5 582.5" fill="none" stroke="#6f757c" stroke-width="2.4"/></svg>
<div class="a" style="left:1170px;top:89px;width:15px;height:543px;background:#f1f1f1"></div>
<div class="a" style="left:1172px;top:172.4px;width:11px;height:434.4px;background:#c1c1c1"></div>
<svg class="o" style="left:1170px;top:88px" width="15" height="544" viewBox="1170 88 15 544"><path d="M1173.8 99 L1177.2 95.4 L1180.6 99 Z M1173.8 622 L1177.2 625.8 L1180.6 622 Z" fill="#505050"/></svg>
<svg class="o" style="left:620px;top:290px" width="22" height="28" viewBox="620 290 22 28"><path d="M624.8 294.8 V310 L628.6 306.3 L631.6 312.6 L634 311.6 L631.2 305.5 L635.8 305.7 Z" fill="#fff" stroke="#15151c" stroke-width="1.2" stroke-linejoin="round"/></svg>
<svg class="o" style="left:450px;top:500px" width="12" height="22" viewBox="450 500 12 22"><path d="M453 504.6 H458.6 M455.8 504.6 V517.6 M453 517.6 H458.6" fill="none" stroke="#2a2a2a" stroke-width="1.2"/></svg>
</body></html>
